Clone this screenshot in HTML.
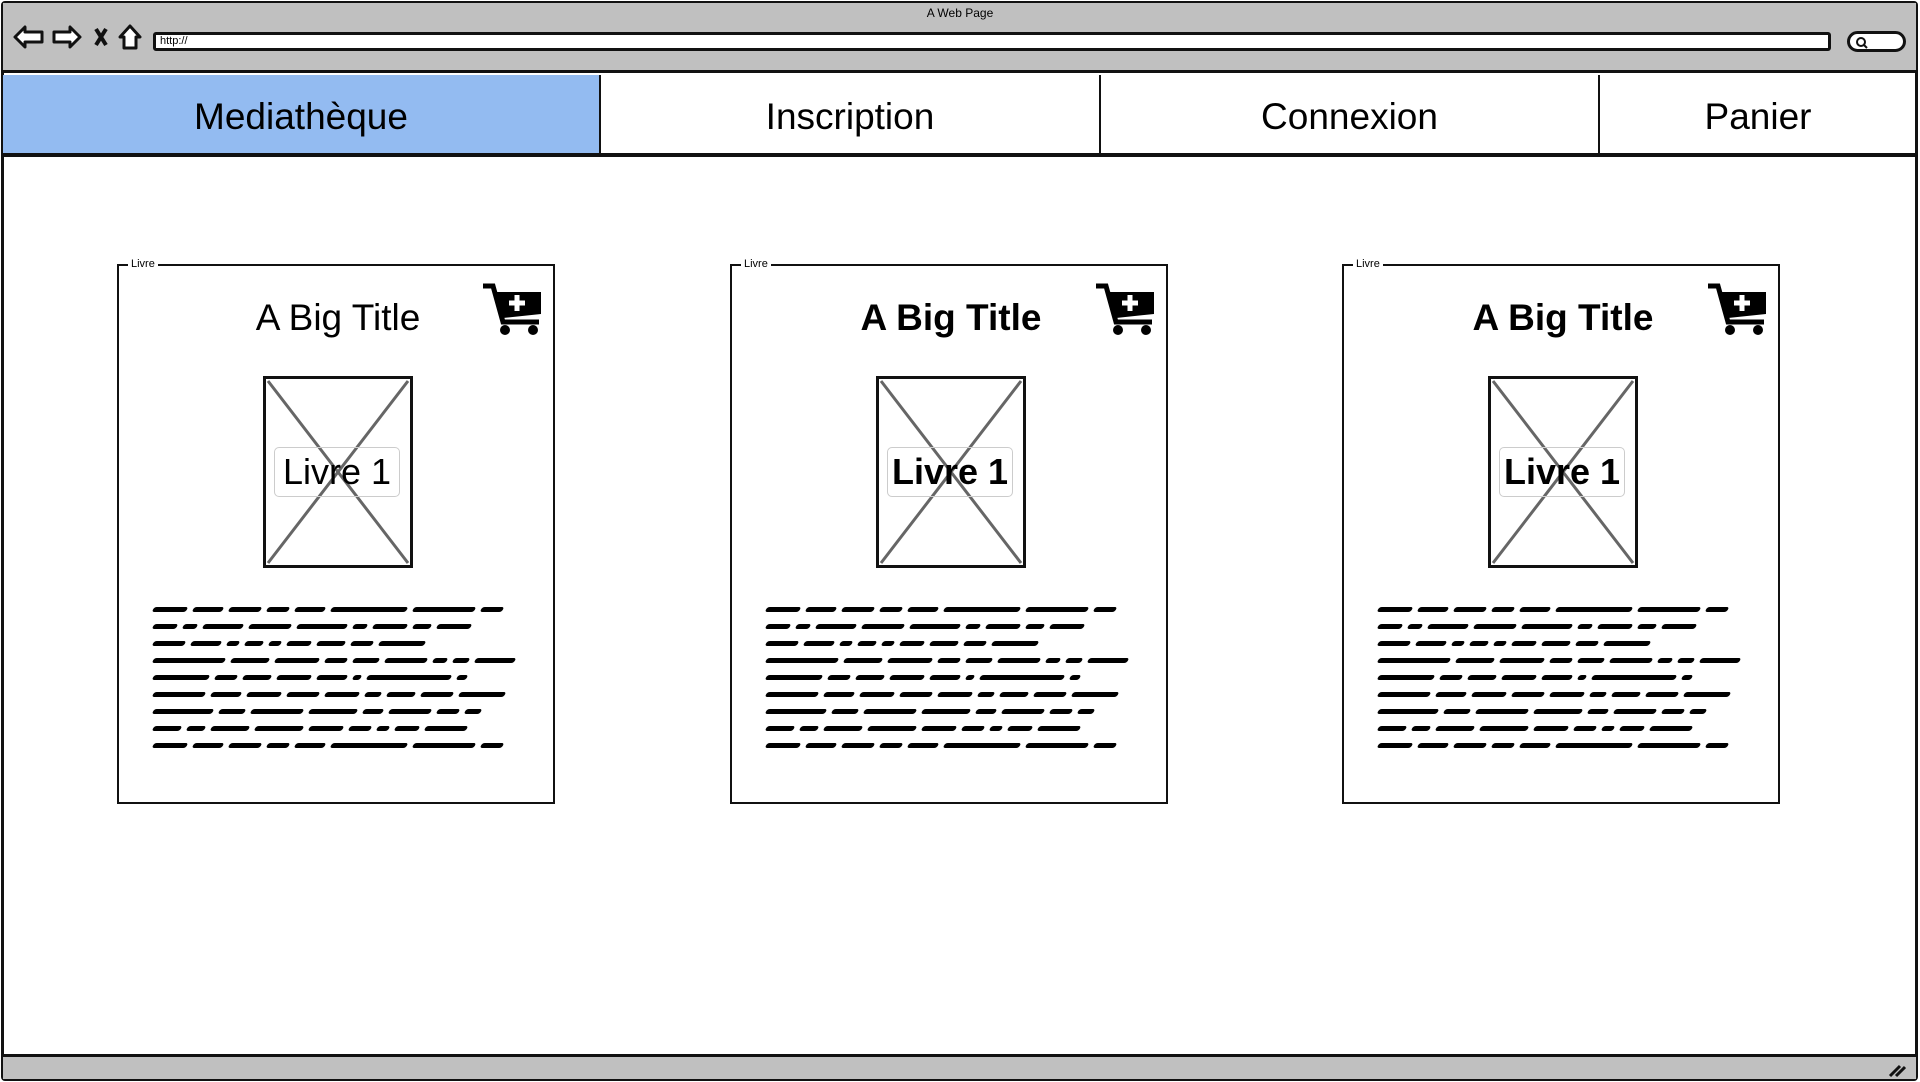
<!DOCTYPE html>
<html><head><meta charset="utf-8"><style>
*{margin:0;padding:0;box-sizing:border-box}
body{width:1920px;height:1082px;background:#fff;position:relative;overflow:hidden;font-family:"Liberation Sans",sans-serif;color:#000}
.abs{position:absolute}
.frame{left:1px;top:1px;width:1917px;height:1080px;border:3px solid #111;border-radius:4px}
.top{left:3px;top:3px;width:1913px;height:70px;background:#c0c0c0;border-bottom:3px solid #111}
.addr{left:153px;top:32px;width:1678px;height:19px;background:#fff;border:3px solid #111;border-radius:3px;font-size:11px;line-height:13px;padding-left:4px}
.search{left:1847px;top:31px;width:59px;height:21px;background:#fff;border:3px solid #111;border-radius:11px}
.nav{top:75px;height:82px;border-bottom:4px solid #111;font-size:37px;text-align:center;line-height:84px}
.status{left:3px;top:1054px;width:1913px;height:25px;background:#c0c0c0;border-top:3px solid #111}
.card{width:438px;height:540px;border:2.5px solid #111;top:264px}
.legend{font-size:11px;background:#fff;padding:0 3px;top:-9px;left:9px;line-height:14px}
.title{font-size:37px;top:30px;left:0;width:438px;text-align:center;line-height:44px}
.img{left:144px;top:110px;width:150px;height:192px;border:3px solid #111}
.lab{left:155px;top:181px;width:126px;height:50px;border:1.5px solid #ccc;border-radius:5px;font-size:36px;text-align:center;line-height:48px}
.scr{left:34px;width:380px;height:5px;white-space:nowrap}
.scr i{display:inline-block;height:5px;background:#000;border-radius:3px;margin-right:6px;vertical-align:top;transform:skewX(-30deg)}
</style></head><body>
<div class="abs frame"></div>
<div class="abs top"></div>
<div class="abs" style="left:0;top:6px;width:1920px;text-align:center;font-size:12px">A Web Page</div>
<svg class="abs" style="left:12px;top:22px" width="140" height="30" viewBox="0 0 140 30">
<path d="M3 15 L13 5 L13 10 L30 10 L30 20 L13 20 L13 25 Z" fill="#fff" stroke="#111" stroke-width="3" stroke-linejoin="round"/>
<path d="M68 15 L58 5 L58 10 L42 10 L42 20 L58 20 L58 25 Z" fill="#fff" stroke="#111" stroke-width="3" stroke-linejoin="round"/>
<path d="M84 7 L94 23 M94 7 L84 23" stroke="#111" stroke-width="4"/>
<path d="M118 4 L128 15 L124 15 L124 26 L112 26 L112 15 L108 15 Z" fill="#fff" stroke="#111" stroke-width="3" stroke-linejoin="round"/>
</svg>
<div class="abs addr">http://</div>
<div class="abs search"><svg width="20" height="16" style="margin:1px 0 0 4px"><circle cx="7" cy="7" r="4" fill="none" stroke="#111" stroke-width="2"/><path d="M10 10 L13 13" stroke="#111" stroke-width="2"/></svg></div>
<div class="abs nav" style="left:3px;width:598px;background:#93bbf1;border-right:2px solid #111">Mediathèque</div>
<div class="abs nav" style="left:601px;width:500px;border-right:2px solid #111">Inscription</div>
<div class="abs nav" style="left:1101px;width:499px;border-right:2px solid #111">Connexion</div>
<div class="abs nav" style="left:1600px;width:316px">Panier</div>
<div class="abs status"><svg class="abs" style="right:8px;top:5px" width="20" height="16"><path d="M2 14 L12 4 M8 14 L17 5" stroke="#111" stroke-width="3"/></svg></div>

<div class="abs card" style="left:117px">
 <div class="abs legend">Livre</div>
 <div class="abs title">A Big Title</div>
 <svg class="abs" style="left:362px;top:16px" width="62" height="54" viewBox="0 0 62 54"><path d="M2 4 H12 L22 40 H58" fill="none" stroke="#000" stroke-width="5"/><path d="M14 10 H60 V32 L22 36 Z" fill="#000"/><path d="M36 13 V29 M28 21 H44" stroke="#fff" stroke-width="5"/><circle cx="24" cy="48" r="5"/><circle cx="52" cy="48" r="5"/></svg>
 <div class="abs img"><svg width="144" height="186"><path d="M2 2 L142 184 M142 2 L2 184" stroke="#666" stroke-width="3"/></svg></div>
 <div class="abs lab">Livre 1</div>
 <div class="abs scr" style="top:341px"><i style="width:34px"></i><i style="width:30px"></i><i style="width:32px"></i><i style="width:22px"></i><i style="width:30px"></i><i style="width:76px"></i><i style="width:62px"></i><i style="width:22px"></i></div>
 <div class="abs scr" style="top:358px"><i style="width:24px"></i><i style="width:14px"></i><i style="width:40px"></i><i style="width:42px"></i><i style="width:50px"></i><i style="width:14px"></i><i style="width:34px"></i><i style="width:18px"></i><i style="width:34px"></i></div>
 <div class="abs scr" style="top:375px"><i style="width:32px"></i><i style="width:30px"></i><i style="width:12px"></i><i style="width:18px"></i><i style="width:12px"></i><i style="width:24px"></i><i style="width:28px"></i><i style="width:22px"></i><i style="width:46px"></i></div>
 <div class="abs scr" style="top:392px"><i style="width:72px"></i><i style="width:38px"></i><i style="width:44px"></i><i style="width:22px"></i><i style="width:26px"></i><i style="width:42px"></i><i style="width:14px"></i><i style="width:16px"></i><i style="width:40px"></i></div>
 <div class="abs scr" style="top:409px"><i style="width:56px"></i><i style="width:22px"></i><i style="width:28px"></i><i style="width:34px"></i><i style="width:30px"></i><i style="width:8px"></i><i style="width:84px"></i><i style="width:10px"></i></div>
 <div class="abs scr" style="top:426px"><i style="width:52px"></i><i style="width:30px"></i><i style="width:34px"></i><i style="width:32px"></i><i style="width:34px"></i><i style="width:16px"></i><i style="width:28px"></i><i style="width:32px"></i><i style="width:46px"></i></div>
 <div class="abs scr" style="top:443px"><i style="width:60px"></i><i style="width:26px"></i><i style="width:52px"></i><i style="width:48px"></i><i style="width:20px"></i><i style="width:42px"></i><i style="width:22px"></i><i style="width:16px"></i></div>
 <div class="abs scr" style="top:460px"><i style="width:28px"></i><i style="width:18px"></i><i style="width:38px"></i><i style="width:48px"></i><i style="width:34px"></i><i style="width:22px"></i><i style="width:12px"></i><i style="width:24px"></i><i style="width:42px"></i></div>
 <div class="abs scr" style="top:477px"><i style="width:34px"></i><i style="width:30px"></i><i style="width:32px"></i><i style="width:22px"></i><i style="width:30px"></i><i style="width:76px"></i><i style="width:62px"></i><i style="width:22px"></i></div>
</div>

<div class="abs card" style="left:730px">
 <div class="abs legend">Livre</div>
 <div class="abs title" style="font-weight:bold">A Big Title</div>
 <svg class="abs" style="left:362px;top:16px" width="62" height="54" viewBox="0 0 62 54"><path d="M2 4 H12 L22 40 H58" fill="none" stroke="#000" stroke-width="5"/><path d="M14 10 H60 V32 L22 36 Z" fill="#000"/><path d="M36 13 V29 M28 21 H44" stroke="#fff" stroke-width="5"/><circle cx="24" cy="48" r="5"/><circle cx="52" cy="48" r="5"/></svg>
 <div class="abs img"><svg width="144" height="186"><path d="M2 2 L142 184 M142 2 L2 184" stroke="#666" stroke-width="3"/></svg></div>
 <div class="abs lab" style="font-weight:bold">Livre 1</div>
 <div class="abs scr" style="top:341px"><i style="width:34px"></i><i style="width:30px"></i><i style="width:32px"></i><i style="width:22px"></i><i style="width:30px"></i><i style="width:76px"></i><i style="width:62px"></i><i style="width:22px"></i></div>
 <div class="abs scr" style="top:358px"><i style="width:24px"></i><i style="width:14px"></i><i style="width:40px"></i><i style="width:42px"></i><i style="width:50px"></i><i style="width:14px"></i><i style="width:34px"></i><i style="width:18px"></i><i style="width:34px"></i></div>
 <div class="abs scr" style="top:375px"><i style="width:32px"></i><i style="width:30px"></i><i style="width:12px"></i><i style="width:18px"></i><i style="width:12px"></i><i style="width:24px"></i><i style="width:28px"></i><i style="width:22px"></i><i style="width:46px"></i></div>
 <div class="abs scr" style="top:392px"><i style="width:72px"></i><i style="width:38px"></i><i style="width:44px"></i><i style="width:22px"></i><i style="width:26px"></i><i style="width:42px"></i><i style="width:14px"></i><i style="width:16px"></i><i style="width:40px"></i></div>
 <div class="abs scr" style="top:409px"><i style="width:56px"></i><i style="width:22px"></i><i style="width:28px"></i><i style="width:34px"></i><i style="width:30px"></i><i style="width:8px"></i><i style="width:84px"></i><i style="width:10px"></i></div>
 <div class="abs scr" style="top:426px"><i style="width:52px"></i><i style="width:30px"></i><i style="width:34px"></i><i style="width:32px"></i><i style="width:34px"></i><i style="width:16px"></i><i style="width:28px"></i><i style="width:32px"></i><i style="width:46px"></i></div>
 <div class="abs scr" style="top:443px"><i style="width:60px"></i><i style="width:26px"></i><i style="width:52px"></i><i style="width:48px"></i><i style="width:20px"></i><i style="width:42px"></i><i style="width:22px"></i><i style="width:16px"></i></div>
 <div class="abs scr" style="top:460px"><i style="width:28px"></i><i style="width:18px"></i><i style="width:38px"></i><i style="width:48px"></i><i style="width:34px"></i><i style="width:22px"></i><i style="width:12px"></i><i style="width:24px"></i><i style="width:42px"></i></div>
 <div class="abs scr" style="top:477px"><i style="width:34px"></i><i style="width:30px"></i><i style="width:32px"></i><i style="width:22px"></i><i style="width:30px"></i><i style="width:76px"></i><i style="width:62px"></i><i style="width:22px"></i></div>
</div>

<div class="abs card" style="left:1342px">
 <div class="abs legend">Livre</div>
 <div class="abs title" style="font-weight:bold">A Big Title</div>
 <svg class="abs" style="left:362px;top:16px" width="62" height="54" viewBox="0 0 62 54"><path d="M2 4 H12 L22 40 H58" fill="none" stroke="#000" stroke-width="5"/><path d="M14 10 H60 V32 L22 36 Z" fill="#000"/><path d="M36 13 V29 M28 21 H44" stroke="#fff" stroke-width="5"/><circle cx="24" cy="48" r="5"/><circle cx="52" cy="48" r="5"/></svg>
 <div class="abs img"><svg width="144" height="186"><path d="M2 2 L142 184 M142 2 L2 184" stroke="#666" stroke-width="3"/></svg></div>
 <div class="abs lab" style="font-weight:bold">Livre 1</div>
 <div class="abs scr" style="top:341px"><i style="width:34px"></i><i style="width:30px"></i><i style="width:32px"></i><i style="width:22px"></i><i style="width:30px"></i><i style="width:76px"></i><i style="width:62px"></i><i style="width:22px"></i></div>
 <div class="abs scr" style="top:358px"><i style="width:24px"></i><i style="width:14px"></i><i style="width:40px"></i><i style="width:42px"></i><i style="width:50px"></i><i style="width:14px"></i><i style="width:34px"></i><i style="width:18px"></i><i style="width:34px"></i></div>
 <div class="abs scr" style="top:375px"><i style="width:32px"></i><i style="width:30px"></i><i style="width:12px"></i><i style="width:18px"></i><i style="width:12px"></i><i style="width:24px"></i><i style="width:28px"></i><i style="width:22px"></i><i style="width:46px"></i></div>
 <div class="abs scr" style="top:392px"><i style="width:72px"></i><i style="width:38px"></i><i style="width:44px"></i><i style="width:22px"></i><i style="width:26px"></i><i style="width:42px"></i><i style="width:14px"></i><i style="width:16px"></i><i style="width:40px"></i></div>
 <div class="abs scr" style="top:409px"><i style="width:56px"></i><i style="width:22px"></i><i style="width:28px"></i><i style="width:34px"></i><i style="width:30px"></i><i style="width:8px"></i><i style="width:84px"></i><i style="width:10px"></i></div>
 <div class="abs scr" style="top:426px"><i style="width:52px"></i><i style="width:30px"></i><i style="width:34px"></i><i style="width:32px"></i><i style="width:34px"></i><i style="width:16px"></i><i style="width:28px"></i><i style="width:32px"></i><i style="width:46px"></i></div>
 <div class="abs scr" style="top:443px"><i style="width:60px"></i><i style="width:26px"></i><i style="width:52px"></i><i style="width:48px"></i><i style="width:20px"></i><i style="width:42px"></i><i style="width:22px"></i><i style="width:16px"></i></div>
 <div class="abs scr" style="top:460px"><i style="width:28px"></i><i style="width:18px"></i><i style="width:38px"></i><i style="width:48px"></i><i style="width:34px"></i><i style="width:22px"></i><i style="width:12px"></i><i style="width:24px"></i><i style="width:42px"></i></div>
 <div class="abs scr" style="top:477px"><i style="width:34px"></i><i style="width:30px"></i><i style="width:32px"></i><i style="width:22px"></i><i style="width:30px"></i><i style="width:76px"></i><i style="width:62px"></i><i style="width:22px"></i></div>
</div>
</body></html>
